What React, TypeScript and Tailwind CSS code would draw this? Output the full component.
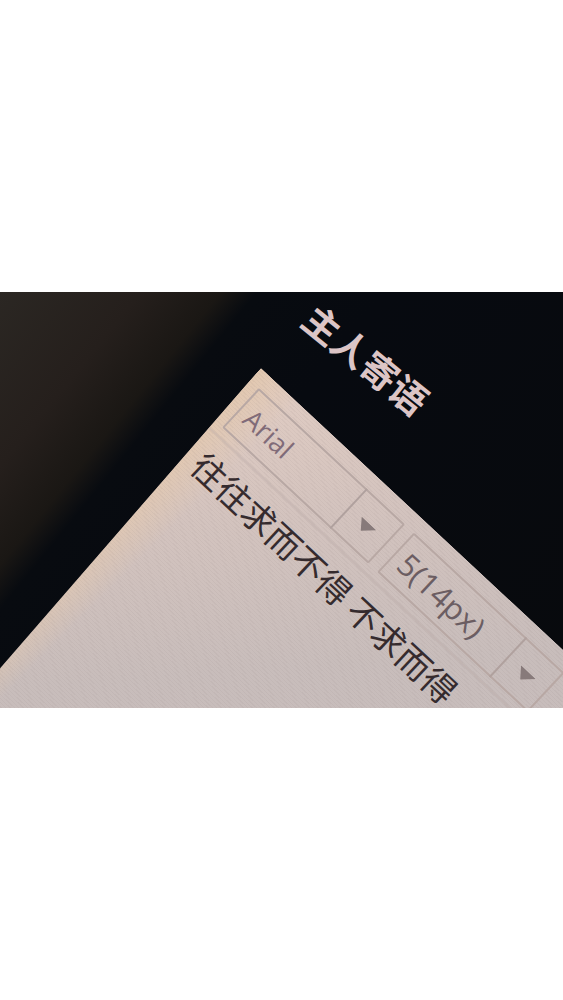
type PickerProps = {
  label: string;
  options: string[];
  className: string;
};

function Picker({ label, options, className }: PickerProps) {
  return (
    <div className={`relative h-[54px] shrink-0 ${className}`}>
      <select
        aria-label={label}
        className="h-full w-full appearance-none rounded-xs border-2 border-[#b8a8a4] bg-transparent pl-2 pr-14 font-['Open_Sans',sans-serif] text-inherit outline-none"
      >
        {options.map((option) => (
          <option key={option}>{option}</option>
        ))}
      </select>
      <span className="pointer-events-none absolute inset-y-0 right-0 flex w-[53px] items-center justify-center border-l-2 border-[#b0a19e] pr-1 pt-1">
        <svg viewBox="0 0 20 11" className="w-5" fill="#877a7a" aria-hidden="true">
          <path d="M0 0h20L9 11z" />
        </svg>
      </span>
    </div>
  );
}

export default function App() {
  return (
    <main className="min-h-dvh bg-white pt-[292px]">
      {/* Screen photo */}
      <section className="relative h-[416px] w-full overflow-hidden bg-[linear-gradient(129deg,#2b2723_0px,#251f1c_110px,#1a1714_172px,#080b10_200px,#070a10_300px,#080a0d_100%)]">
        {/* Heading */}
        <h1
          id="heading"
          className="absolute left-[323px] top-[3px] origin-top-left rotate-[39deg] whitespace-nowrap font-['Noto_Sans_CJK_SC',sans-serif] text-[37px] leading-[44px] font-bold text-[#dcc5c6]"
        >
          主人寄语
        </h1>

        {/* Editor sheet */}
        <div className="absolute left-[261px] top-[76px] h-[480px] w-[540px] origin-top-left rotate-[43deg] bg-[linear-gradient(92deg,#e2c8b0_0px,transparent_50px),linear-gradient(133deg,#e2cdc3_0px,#d3c3be_150px,#c8bdbb_300px,#c4bbbe_100%)] [clip-path:polygon(0_0,100%_0,100%_100%,17px_100%)]">
          <div className="absolute inset-0 bg-[repeating-linear-gradient(0deg,#75656510_0px,#75656510_1px,transparent_1px,transparent_3px)]" />

          <div className="relative flex h-20 gap-3 border-b-2 border-[#b8a8a460] pl-3 pt-4">
            <Picker
              label="字体"
              options={["Arial", "Tahoma", "Verdana"]}
              className="w-[200px] text-[27px] text-[#806b78]"
            />
            <Picker
              label="字号"
              options={["5(14px)", "4(13px)", "6(16px)"]}
              className="w-[206px] text-[31px] text-[#6b5d62]"
            />
          </div>

          <textarea
            aria-labelledby="heading"
            defaultValue="往往求而不得 不求而得"
            className="relative block h-[380px] w-full resize-none bg-transparent pl-4 pt-1 font-['Noto_Sans_CJK_SC',sans-serif] text-[34px] leading-[52px] text-[#352b2e] outline-none"
          />
        </div>
      </section>
    </main>
  );
}
